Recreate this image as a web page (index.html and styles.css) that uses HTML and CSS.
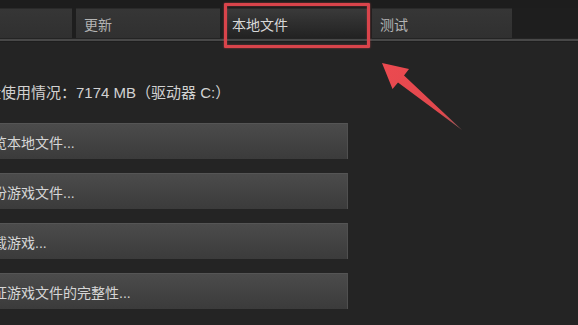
FILE: index.html
```html
<!DOCTYPE html>
<html lang="zh-CN">
<head>
<meta charset="utf-8">
<title>本地文件</title>
<link rel="stylesheet" href="styles.css">
</head>
<body>
<div class="page">
  <div class="topstrip"></div>
  <div class="tabs">
    <div class="tab">常规</div>
    <div class="tab">更新</div>
    <div class="tab tab-active">本地文件</div>
    <div class="tab tab-last">测试</div>
  </div>
  <div class="tabline"></div>
  <div class="content">
    <div class="usage">磁盘使用情况：7174 MB（驱动器 C:）</div>
    <div class="actions">
      <div class="btn">浏览本地文件...</div>
      <div class="btn">备份游戏文件...</div>
      <div class="btn">卸载游戏...</div>
      <div class="btn">验证游戏文件的完整性...</div>
    </div>
  </div>
  <div class="highlight"></div>
  <svg class="arrow" width="578" height="325" viewBox="0 0 578 325">
    <defs>
      <linearGradient id="ag" x1="383" y1="63" x2="462" y2="130" gradientUnits="userSpaceOnUse">
        <stop offset="0" stop-color="#ec4a50"/>
        <stop offset="0.75" stop-color="#e0484d"/>
        <stop offset="1" stop-color="#8a5a5a"/>
      </linearGradient>
    </defs>
    <polygon points="382,63 409,69 404,75.5 462,130 398,82.5 392.5,89" fill="url(#ag)"/>
  </svg>
</div>
</body>
</html>
```

FILE: styles.css
```css
html, body {
  margin: 0;
  padding: 0;
}
body {
  background: #242424;
  font-family: "Liberation Sans", "Noto Sans CJK SC", sans-serif;
  overflow: hidden;
}
.page {
  position: relative;
  width: 578px;
  height: 325px;
  overflow: hidden;
  background: #242424;
}
.topstrip {
  height: 8px;
  background: #1d1d1d;
}
.tabs {
  display: flex;
  gap: 4px;
  height: 30px;
  margin-left: -72px;
  background: #1e1e1e;
}
.tab {
  flex: 0 0 144px;
  box-sizing: border-box;
  padding-left: 8px;
  padding-top: 1px;
  display: flex;
  align-items: center;
  font-size: 14px;
  color: #b4b4b4;
  background: linear-gradient(#363636, #303030);
  border-top: 1px solid #2a2a2a;
}
.tab-last {
  flex-basis: 140px;
}
.tab-active {
  background: linear-gradient(#3a3a3a, #222222);
  color: #d8d8d8;
}
.tabline {
  height: 2px;
  margin-top: 1px;
  background: #484848;
  border-bottom: 1px solid #1e1e1e;
}
.content {
  margin-left: -32px;
  padding-top: 42px;
}
.usage {
  margin-left: 3px;
  font-size: 15px;
  line-height: 18px;
  color: #d2d2d2;
}
.actions {
  display: flex;
  flex-direction: column;
  gap: 14px;
  margin-top: 21px;
  width: 380px;
}
.btn {
  height: 36px;
  box-sizing: border-box;
  padding-left: 11px;
  display: flex;
  align-items: center;
  font-size: 14px;
  color: #d6d6d6;
  background: linear-gradient(#4b4b4b, #3b3b3b);
  border-top: 1px solid #555;
  border-right: 1px solid #505050;
}
.highlight {
  position: absolute;
  left: 224px;
  top: 3px;
  width: 140px;
  height: 39px;
  border: 3px solid #d9444b;
  box-shadow: 0 0 2px rgba(230, 80, 85, 0.7), inset 0 0 2px rgba(230, 80, 85, 0.5);
  border-radius: 1px;
}
.arrow {
  position: absolute;
  left: 0;
  top: 0;
}
```
